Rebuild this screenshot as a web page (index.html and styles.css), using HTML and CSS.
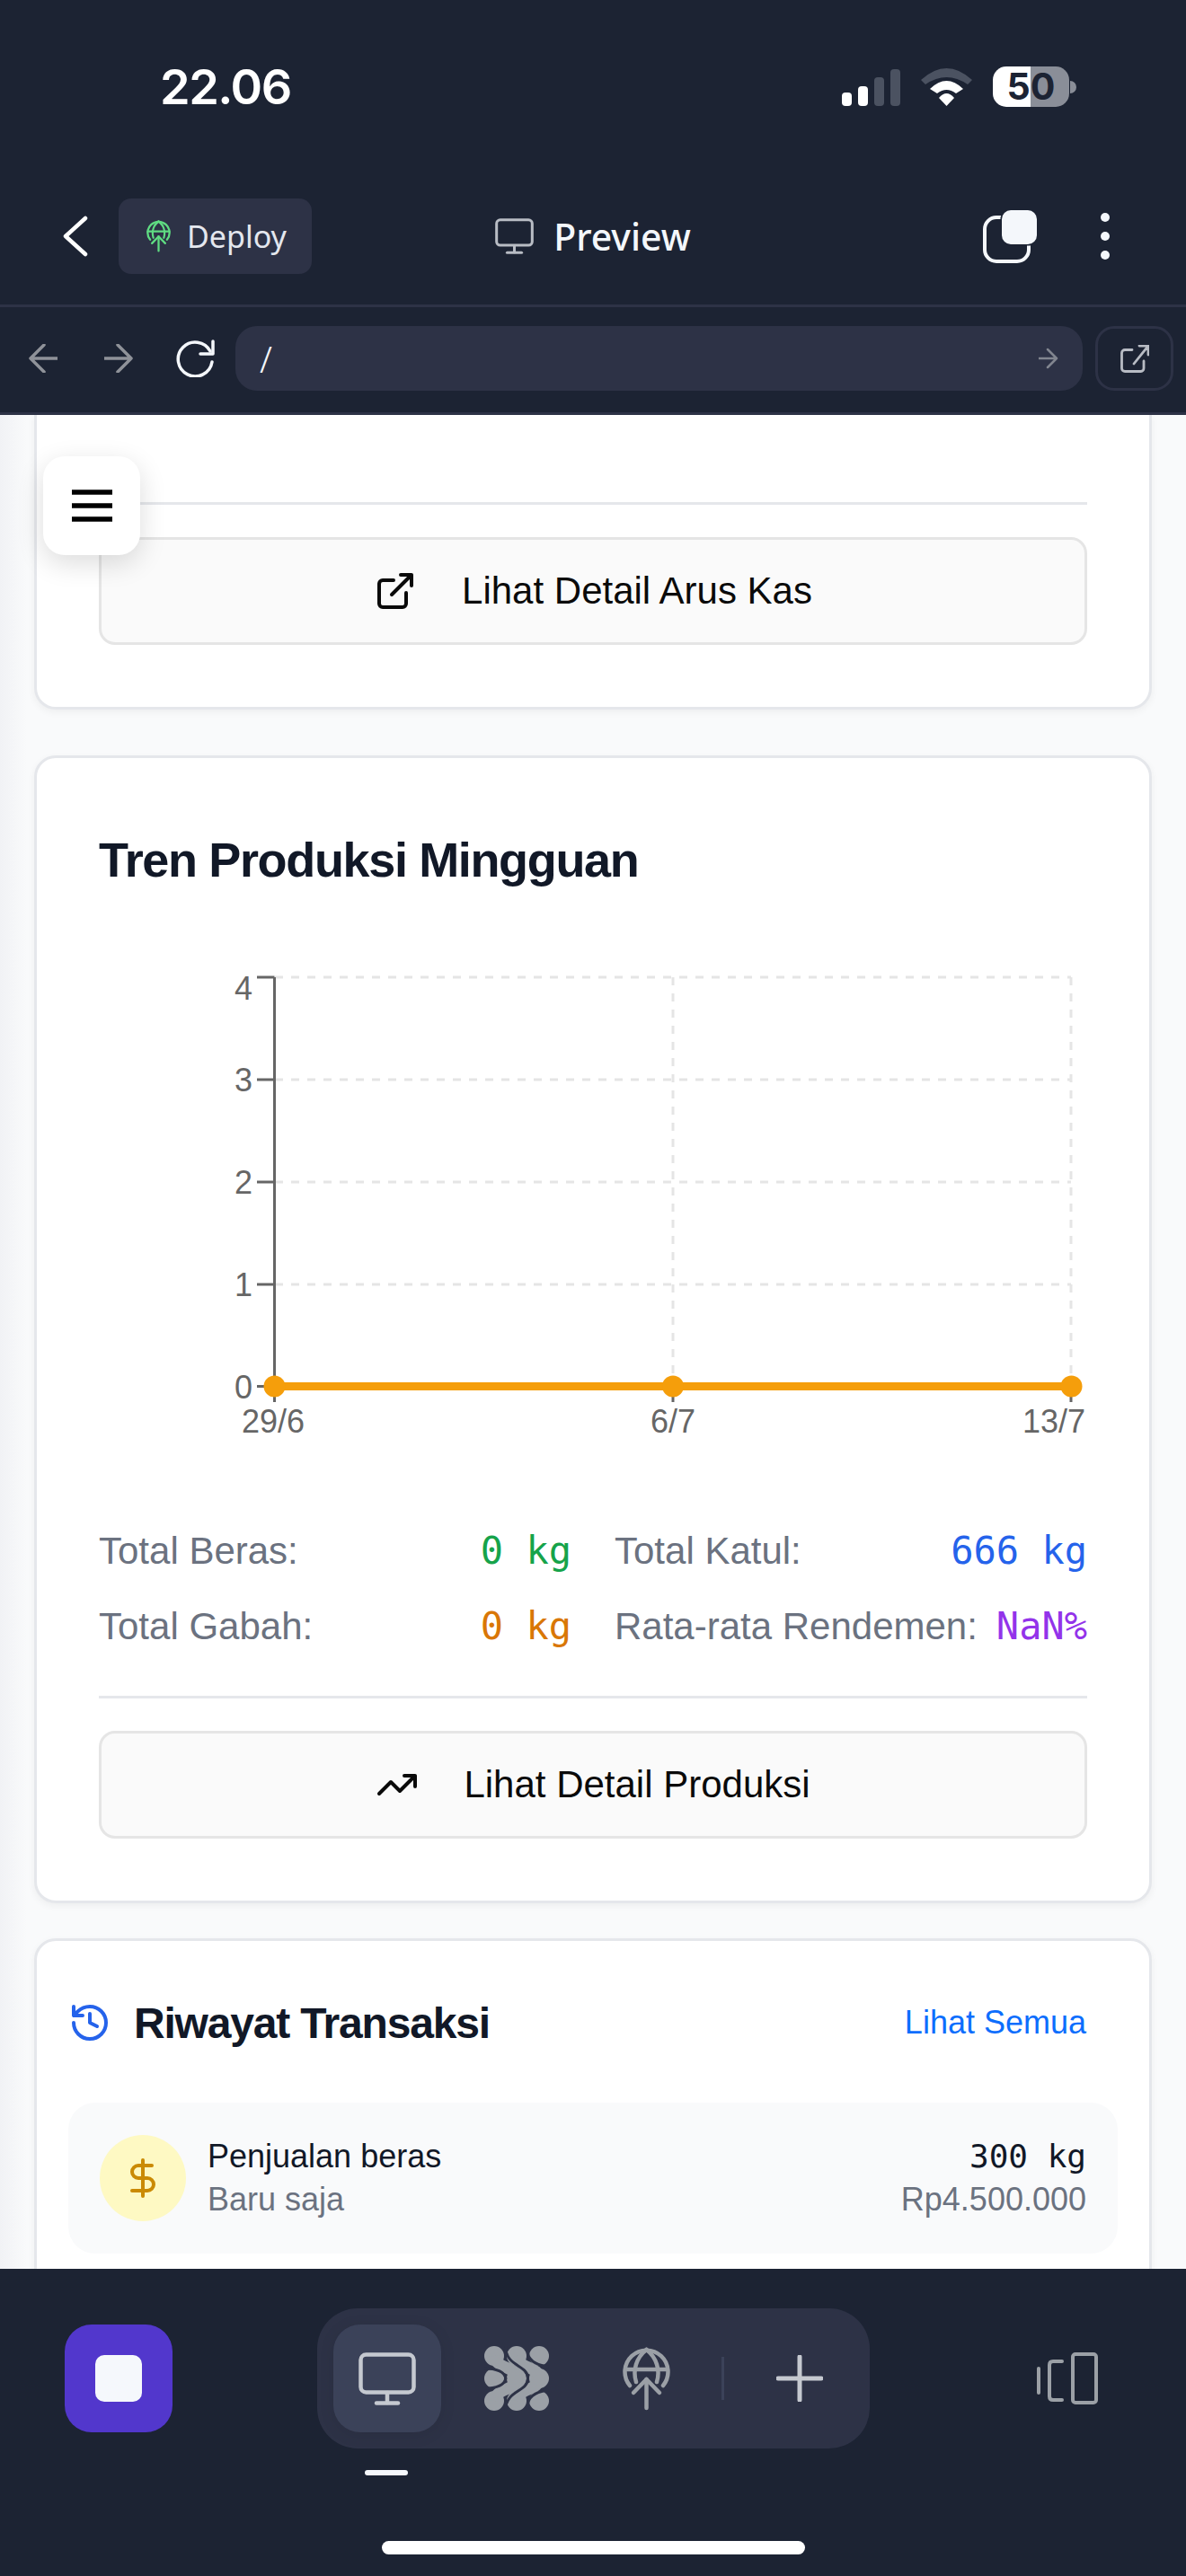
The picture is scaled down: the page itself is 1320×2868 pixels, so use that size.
FILE: index.html
```html
<!DOCTYPE html>
<html lang="en">
<head>
    <meta charset="UTF-8">
    <title>Preview</title>
    <link rel="stylesheet" href="styles.css">
</head>
<body>
    <svg class="defs" width="0" height="0">
        <symbol id="globe-up" viewBox="0 0 53 71">
            <g fill="none" stroke="currentColor" stroke-width="4.5" stroke-linecap="round" stroke-linejoin="round">
                <path d="M8 43A24 24 0 1 1 45 43"/>
                <path d="M3 25H50"/>
                <path d="M26.5 3C15 12 11 26 15 39"/>
                <path d="M26.5 3C38 12 42 26 38 39"/>
                <path d="M26.5 68V36"/>
                <path d="M12 51L26.5 36L41 51"/>
            </g>
        </symbol>
        <symbol id="monitor" viewBox="0 0 64 59">
            <g fill="none" stroke="currentColor" stroke-width="4.5" stroke-linecap="round" stroke-linejoin="round">
                <rect x="2.5" y="2.5" width="59" height="42" rx="6"/>
                <path d="M32 45V56"/>
                <path d="M20 56.5H44"/>
            </g>
        </symbol>
    </svg>

    <div class="phone">
        <header class="top">
            <div class="status">
                <span class="time">22.06</span>
                <div class="status-icons">
                    <div class="signal">
                        <i class="bar bar1"></i>
                        <i class="bar bar2"></i>
                        <i class="bar bar3"></i>
                        <i class="bar bar4"></i>
                    </div>
                    <svg class="wifi" viewBox="0 0 57 42" width="57" height="42">
                        <path fill="#4b5261" d="M0 13Q28.5 -13 57 13L52 18Q28.5 2 5 18Z"/>
                        <path fill="#fff" d="M10 23Q28.5 5 47 23L39 28Q28.5 20 18 28Z"/>
                        <path fill="#fff" d="M20 33Q28.5 23 37 33L28.5 42Z"/>
                    </svg>
                    <div class="battery">50</div>
                    <i class="battery-nub"></i>
                </div>
            </div>

            <nav class="nav">
                <div class="nav-left">
                    <svg class="back" viewBox="0 0 28 46" width="28" height="46">
                        <path d="M25 3L3 23L25 43" fill="none" stroke="#fff" stroke-width="4.5" stroke-linecap="round" stroke-linejoin="round"/>
                    </svg>
                    <div class="deploy">
                        <svg class="deploy-icon" width="27" height="36"><use href="#globe-up"/></svg>
                        <span>Deploy</span>
                    </div>
                </div>
                <div class="nav-title">
                    <svg class="nav-monitor" width="43" height="40"><use href="#monitor"/></svg>
                    <span>Preview</span>
                </div>
                <div class="nav-right">
                    <svg class="tabs" viewBox="0 -1 61 60" width="61" height="60">
                        <rect x="2" y="8" width="49" height="49" rx="13" fill="none" stroke="#f4f7fb" stroke-width="4"/>
                        <rect class="tabs-front" x="21" y="0" width="39" height="38" rx="10"/>
                    </svg>
                    <svg class="dots" viewBox="0 0 10 52" width="10" height="52">
                        <circle cx="5" cy="5" r="5" fill="#f4f7fb"/>
                        <circle cx="5" cy="26" r="5" fill="#f4f7fb"/>
                        <circle cx="5" cy="47" r="5" fill="#f4f7fb"/>
                    </svg>
                </div>
            </nav>

            <div class="browser">
                <svg class="arrow" viewBox="0 0 32 32" width="32" height="32">
                    <path d="M32 16H2M17 1L2 16L17 31" fill="none" stroke="#8f9299" stroke-width="3.5" stroke-linecap="round" stroke-linejoin="round"/>
                </svg>
                <svg class="arrow arrow-next" viewBox="0 0 32 32" width="32" height="32">
                    <path d="M0 16H30M15 1L30 16L15 31" fill="none" stroke="#8f9299" stroke-width="3.5" stroke-linecap="round" stroke-linejoin="round"/>
                </svg>
                <svg class="reload" viewBox="0 0 44 42" width="44" height="42">
                    <path d="M38 13A19 19 0 1 0 40 25" fill="none" stroke="#f4f7fb" stroke-width="3.5" stroke-linecap="round"/>
                    <path d="M41 2V16H27" fill="none" stroke="#f4f7fb" stroke-width="3.5" stroke-linecap="round" stroke-linejoin="round"/>
                </svg>
                <div class="url">
                    <span class="url-text">/</span>
                    <svg viewBox="0 0 22 24" width="22" height="24">
                        <path d="M0 12H20M10 2L20 12L10 22" fill="none" stroke="#81858f" stroke-width="2.5" stroke-linecap="round" stroke-linejoin="round"/>
                    </svg>
                </div>
                <div class="open-btn">
                    <svg viewBox="0 0 32 31" width="32" height="31">
                        <path d="M31 1L15 21M21 1H31V11M26 18V26A3.500 3.500 0 0 1 22.500 29.500H5A3.500 3.500 0 0 1 1.500 26V9A3.500 3.500 0 0 1 5 5.500H13" fill="none" stroke="#b8bcc4" stroke-width="2.800" stroke-linecap="round" stroke-linejoin="round"/>
                    </svg>
                </div>
            </div>
        </header>

        <main class="page">
            <button class="menu-btn">
                <svg viewBox="0 0 45 36" width="45" height="36">
                    <path d="M0 3H45M0 18H45M0 33H45" fill="none" stroke="#000" stroke-width="5.500" stroke-linecap="round"/>
                </svg>
            </button>

            <section class="card card-cut">
                <div class="link-row">
                    <a class="link-btn">
                        <svg viewBox="0 0 24 24" width="48" height="48">
                            <path d="M15 3h6v6M10 14 21 3M18 13v6a2 2 0 0 1-2 2H5a2 2 0 0 1-2-2V8a2 2 0 0 1 2-2h6" fill="none" stroke="#0a0a0a" stroke-width="2" stroke-linecap="round" stroke-linejoin="round"/>
                        </svg>
                        <span>Lihat Detail Arus Kas</span>
                    </a>
                </div>
            </section>

            <section class="card card-chart">
                <h2 class="card-title">Tren Produksi Mingguan</h2>

                <svg class="chart" viewBox="0 0 1098 560" width="1098" height="560">
                    <g class="grid-lines">
                        <path d="M196 27H1082"/>
                        <path d="M196 141H1082"/>
                        <path d="M196 255H1082"/>
                        <path d="M196 369H1082"/>
                        <path d="M639 27V482"/>
                        <path d="M1082 27V482"/>
                    </g>
                    <g class="axis">
                        <path d="M195.500 27V500"/>
                        <path d="M176 27H195.500"/>
                        <path d="M176 141H195.500"/>
                        <path d="M176 255H195.500"/>
                        <path d="M176 369H195.500"/>
                        <path d="M176 482.500H195.500"/>
                        <path d="M639 482V500"/>
                        <path d="M1082 482V500"/>
                    </g>
                    <g class="tick-text">
                        <text x="171" y="52" text-anchor="end">4</text>
                        <text x="171" y="154" text-anchor="end">3</text>
                        <text x="171" y="268" text-anchor="end">2</text>
                        <text x="171" y="382" text-anchor="end">1</text>
                        <text x="171" y="496" text-anchor="end">0</text>
                        <text x="194" y="534" text-anchor="middle">29/6</text>
                        <text x="639" y="534" text-anchor="middle">6/7</text>
                        <text x="1098" y="534" text-anchor="end">13/7</text>
                    </g>
                    <path class="line" d="M195.500 482.500H1082.500"/>
                    <circle class="dot" cx="195.500" cy="482.500" r="12"/>
                    <circle class="dot" cx="639" cy="482.500" r="12"/>
                    <circle class="dot" cx="1082.500" cy="482.500" r="12"/>
                </svg>

                <div class="totals">
                    <div class="total">
                        <span>Total Beras:</span>
                        <b class="mono green">0 kg</b>
                    </div>
                    <div class="total">
                        <span>Total Katul:</span>
                        <b class="mono blue">666 kg</b>
                    </div>
                    <div class="total">
                        <span>Total Gabah:</span>
                        <b class="mono orange">0 kg</b>
                    </div>
                    <div class="total">
                        <span>Rata-rata Rendemen:</span>
                        <b class="mono purple">NaN%</b>
                    </div>
                </div>

                <div class="link-row">
                    <a class="link-btn">
                        <svg viewBox="0 0 24 24" width="48" height="48">
                            <path d="M22 7 13.500 15.500 8.500 10.500 2 17M16 7h6v6" fill="none" stroke="#0a0a0a" stroke-width="2" stroke-linecap="round" stroke-linejoin="round"/>
                        </svg>
                        <span>Lihat Detail Produksi</span>
                    </a>
                </div>
            </section>

            <section class="card card-history">
                <div class="history-head">
                    <svg viewBox="0 0 24 24" width="48" height="48">
                        <path d="M3 12a9 9 0 1 0 9-9 9.750 9.750 0 0 0-6.740 2.740L3 8M3 3v5h5M12 7v5l4 2" fill="none" stroke="#2563eb" stroke-width="2" stroke-linecap="round" stroke-linejoin="round"/>
                    </svg>
                    <h3>Riwayat Transaksi</h3>
                    <a class="see-all">Lihat Semua</a>
                </div>
                <div class="history-item">
                    <div class="coin">
                        <svg viewBox="0 0 24 24" width="48" height="48">
                            <path d="M12 2v20M17 5H9.500a3.500 3.500 0 0 0 0 7h5a3.500 3.500 0 0 1 0 7H6" fill="none" stroke="#ca8a04" stroke-width="2" stroke-linecap="round" stroke-linejoin="round"/>
                        </svg>
                    </div>
                    <div class="item-text">
                        <div class="item-name">Penjualan beras</div>
                        <div class="item-sub">Baru saja</div>
                    </div>
                    <div class="item-values">
                        <div class="item-qty">300 kg</div>
                        <div class="item-sub">Rp4.500.000</div>
                    </div>
                </div>
            </section>
        </main>

        <footer class="bottom">
            <div class="dock-row">
                <div class="stop-btn"><i></i></div>
                <div class="dock-wrap">
                    <div class="dock">
                        <div class="dock-item active">
                            <svg class="dock-monitor" width="64" height="59"><use href="#monitor"/></svg>
                        </div>
                        <div class="dock-item">
                            <svg viewBox="0 0 72 72" width="72" height="72">
                                <g fill="#9ba0a6">
                                    <circle cx="11" cy="11" r="11"/>
                                    <circle cx="36" cy="11" r="11"/>
                                    <circle cx="61" cy="11" r="11"/>
                                    <circle cx="11" cy="36" r="11"/>
                                    <circle cx="36" cy="36" r="11"/>
                                    <circle cx="61" cy="36" r="11"/>
                                    <circle cx="11" cy="61" r="11"/>
                                    <circle cx="36" cy="61" r="11"/>
                                    <circle cx="61" cy="61" r="11"/>
                                </g>
                                <g fill="none" stroke="#9ba0a6" stroke-width="13">
                                    <path d="M11 11C13 26 36 22 36 36C36 50 13 46 11 61"/>
                                    <path d="M36 11C38 26 61 22 61 36C61 50 38 46 36 61"/>
                                </g>
                                <g fill="none" stroke="#2d3246" stroke-width="3">
                                    <path d="M23.500 0C24 24 48.500 20 48.500 36C48.500 52 24 48 23.500 72"/>
                                    <path d="M0 25C10 25 22 27 24 36C22 45 10 47 0 47"/>
                                    <path d="M48.500 0V8C50 18 62 22 72 23"/>
                                    <path d="M48.500 72V64C50 54 62 50 72 49"/>
                                </g>
                            </svg>
                        </div>
                        <div class="dock-item">
                            <svg class="dock-globe" width="53" height="71"><use href="#globe-up"/></svg>
                        </div>
                        <i class="dock-sep"></i>
                        <div class="dock-item dock-plus">
                            <svg viewBox="0 0 52 52" width="52" height="52">
                                <path d="M26 2V50M2 26H50" fill="none" stroke="#c5c9d0" stroke-width="5" stroke-linecap="round"/>
                            </svg>
                        </div>
                    </div>
                    <i class="dock-mark"></i>
                </div>
                <svg class="layout-icon" viewBox="0 0 68 58" width="68" height="58">
                    <g fill="none" stroke="#9ba0a6" stroke-linecap="round" stroke-linejoin="round">
                        <rect x="40" y="2" width="26" height="54" rx="3" stroke-width="4"/>
                        <path d="M28 10H18Q14 10 14 14V49Q14 53 18 53H28" stroke-width="4"/>
                        <path d="M2 18V45" stroke-width="4"/>
                    </g>
                </svg>
            </div>
            <i class="home-bar"></i>
        </footer>
    </div>
</body>
</html>
```

FILE: styles.css
```css
*{
    margin: 0;
    padding: 0;
    box-sizing: border-box;
}
body{
    background: #1c2333;
    font-family: "Liberation Sans", Arial, sans-serif;
}
i{
    display: block;
}
.defs{
    position: absolute;
}
.phone{
    display: flex;
    flex-direction: column;
    width: 1320px;
    height: 2868px;
    overflow: hidden;
}

/* status bar */
.top{
    background: #1c2333;
    flex: none;
}
.status{
    display: flex;
    align-items: center;
    justify-content: space-between;
    height: 193px;
    padding: 0 122px 0 178px;
}
.time{
    font-family: Inter, sans-serif;
    font-size: 54px;
    font-weight: 600;
    letter-spacing: -1.5px;
    color: #fff;
}
.status-icons{
    display: flex;
    align-items: center;
}
.signal{
    display: flex;
    align-items: flex-end;
    gap: 7px;
    height: 42px;
    margin-right: 23px;
    margin-top: 1px;
}
.bar{
    width: 11px;
    border-radius: 4px;
    background: #fff;
}
.bar1{ height: 15px; }
.bar2{ height: 22px; }
.bar3{ height: 32px; background: #4b5261; }
.bar4{ height: 41px; background: #4b5261; }
.wifi{
    margin-right: 23px;
}
.battery{
    width: 85px;
    height: 45px;
    border-radius: 15px;
    background: linear-gradient(90deg, #fff 50%, #8a8e98 50%);
    color: #1c2333;
    font-family: Inter, sans-serif;
    font-size: 41px;
    font-weight: 700;
    line-height: 45px;
    text-align: center;
}
.battery-nub{
    width: 7px;
    height: 14px;
    margin-left: 1px;
    border-radius: 0 7px 7px 0;
    background: #8a8e98;
}

/* nav */
.nav{
    display: grid;
    grid-template-columns: 1fr auto 1fr;
    align-items: center;
    height: 146px;
    padding: 0 70px 6px 70px;
}
.nav-left{
    display: flex;
    align-items: center;
    gap: 34px;
}
.deploy{
    display: flex;
    align-items: center;
    gap: 18px;
    width: 215px;
    height: 84px;
    padding-left: 31px;
    border-radius: 14px;
    background: #2d3246;
    color: #e4e7ee;
    font-family: "Noto Sans", sans-serif;
    font-size: 34px;
}
.deploy-icon{
    color: #5fdc82;
}
.nav-title{
    display: flex;
    align-items: center;
    gap: 22px;
    color: #f4f7fb;
    font-family: "Noto Sans", sans-serif;
    font-size: 41px;
    font-weight: 500;
}
.nav-monitor{
    color: #b8bcc4;
}
.nav-right{
    display: flex;
    align-items: center;
    justify-content: flex-end;
    gap: 70px;
    padding-right: 15px;
}
.tabs-front{
    fill: #f4f7fb;
    stroke: #1c2333;
    stroke-width: 3;
    paint-order: stroke;
}

/* browser bar */
.browser{
    display: flex;
    align-items: center;
    height: 123px;
    padding: 0 14px 3px 32px;
    border-top: 3px solid #2d3246;
    border-bottom: 3px solid #2d3246;
}
.arrow-next{
    margin-left: 52px;
}
.reload{
    margin-left: 48px;
}
.url{
    display: flex;
    align-items: center;
    justify-content: space-between;
    flex: 1;
    height: 72px;
    margin-left: 22px;
    padding: 0 27px;
    border-radius: 24px;
    background: #2d3246;
}
.url-text{
    color: #f4f7fb;
    font-family: "Noto Sans", sans-serif;
    font-size: 40px;
    font-weight: 300;
}
.open-btn{
    display: flex;
    align-items: center;
    justify-content: center;
    width: 87px;
    height: 72px;
    margin-left: 14px;
    border: 3px solid #2d3246;
    border-radius: 21px;
}

/* page */
.page{
    position: relative;
    flex: 1;
    min-height: 0;
    overflow: hidden;
    padding: 0 38px;
    background: linear-gradient(90deg, #f1f2f5 0, #f9fafb 30px);
}
.menu-btn{
    position: absolute;
    left: 48px;
    top: 46px;
    display: flex;
    align-items: center;
    justify-content: center;
    width: 108px;
    height: 110px;
    border: 0;
    border-radius: 24px;
    background: #fff;
    box-shadow: 0 9px 30px rgba(0, 0, 0, 0.14);
}
.card{
    padding: 69px;
    border: 3px solid #e5e7eb;
    border-radius: 24px;
    background: #fff;
    box-shadow: 0 3px 9px rgba(0, 0, 0, 0.05);
}
.card-cut{
    height: 328px;
    padding-top: 97px;
    border-top: 0;
    border-radius: 0 0 24px 24px;
}
.card-chart{
    height: 1278px;
    margin-top: 51px;
}
.card-title{
    margin-top: 4px;
    font-size: 54px;
    font-weight: 700;
    line-height: 81px;
    letter-spacing: -1.35px;
    color: #111827;
}
.chart{
    display: block;
    margin-top: 63px;
}
.grid-lines path{
    stroke: #e5e5e5;
    stroke-width: 3;
    stroke-dasharray: 9 9;
    fill: none;
}
.axis path{
    stroke: #666;
    stroke-width: 3;
    fill: none;
}
.tick-text text{
    fill: #666;
    font-size: 36px;
}
.line{
    stroke: #f59e0b;
    stroke-width: 9;
    fill: none;
}
.dot{
    fill: #f59e0b;
}
.totals{
    display: grid;
    grid-template-columns: 1fr 1fr;
    gap: 21px 48px;
    margin-top: 74px;
}
.total{
    display: flex;
    justify-content: space-between;
    font-size: 42px;
    line-height: 63px;
    color: #6b7280;
}
.mono{
    font-family: "DejaVu Sans Mono", monospace;
    font-weight: 400;
}
.green{ color: #16a34a; }
.blue{ color: #2563eb; }
.orange{ color: #d97706; }
.purple{ color: #9333ea; }
.link-row{
    margin-top: 46px;
    padding-top: 36px;
    border-top: 3px solid #e5e7eb;
}
.card-cut .link-row{
    margin-top: 0;
}
.link-btn{
    display: flex;
    align-items: center;
    justify-content: center;
    gap: 50px;
    height: 120px;
    border: 3px solid #e5e5e5;
    border-radius: 18px;
    background: #fafafa;
    color: #0a0a0a;
    font-size: 42px;
}
.card-history{
    margin-top: 39px;
    padding: 55px 35px 60px;
}
.history-head{
    display: flex;
    align-items: center;
    gap: 25px;
    height: 72px;
    padding-right: 35px;
}
.history-head h3{
    flex: 1;
    font-size: 48px;
    font-weight: 700;
    letter-spacing: -1.2px;
    color: #111827;
}
.see-all{
    color: #0d6efd;
    font-size: 36px;
}
.history-item{
    display: flex;
    align-items: center;
    gap: 24px;
    margin-top: 53px;
    padding: 36px 35px;
    border-radius: 30px;
    background: #f9fafb;
}
.coin{
    display: flex;
    align-items: center;
    justify-content: center;
    width: 96px;
    height: 96px;
    border-radius: 50%;
    background: #fef9c3;
}
.item-text{
    flex: 1;
}
.item-name,
.item-qty,
.item-sub{
    font-size: 36px;
    line-height: 48px;
}
.item-name,
.item-qty{
    color: #111827;
}
.item-sub{
    color: #6b7280;
}
.item-qty{
    font-family: "DejaVu Sans Mono", monospace;
}
.item-values{
    text-align: right;
}

/* bottom bar */
.bottom{
    flex: none;
    height: 342px;
    background: #1c2333;
}
.dock-row{
    display: flex;
    align-items: flex-start;
    height: 303px;
    padding: 44px 0 0 72px;
}
.stop-btn{
    display: flex;
    align-items: center;
    justify-content: center;
    width: 120px;
    height: 120px;
    margin-top: 18px;
    border-radius: 30px;
    background: #5237cc;
}
.stop-btn i{
    width: 52px;
    height: 52px;
    border-radius: 10px;
    background: #f5f8fc;
}
.dock-wrap{
    margin-left: 161px;
}
.dock{
    display: flex;
    align-items: center;
    width: 615px;
    height: 156px;
    padding: 0 18px;
    border-radius: 45px;
    background: #2d3246;
}
.dock-item{
    display: flex;
    align-items: center;
    justify-content: center;
    width: 120px;
    height: 120px;
    margin-right: 24px;
    border-radius: 30px;
}
.dock-item.active{
    background: #3b4259;
    box-shadow: 0 3px 18px rgba(0, 0, 0, 0.08);
}
.dock-monitor{
    color: #c5c9d0;
}
.dock-globe{
    color: #9ba0a6;
}
.dock-sep{
    width: 3px;
    height: 48px;
    background: #3b4259;
}
.dock-plus{
    width: 60px;
    margin: 0 0 0 54px;
}
.dock-mark{
    width: 48px;
    height: 6px;
    margin: 24px 0 0 53px;
    border-radius: 3px;
    background: #f5f8fc;
}
.layout-icon{
    margin: 49px 0 0 186px;
}
.home-bar{
    width: 471px;
    height: 15px;
    margin: 0 auto;
    border-radius: 8px;
    background: #fff;
}
```
